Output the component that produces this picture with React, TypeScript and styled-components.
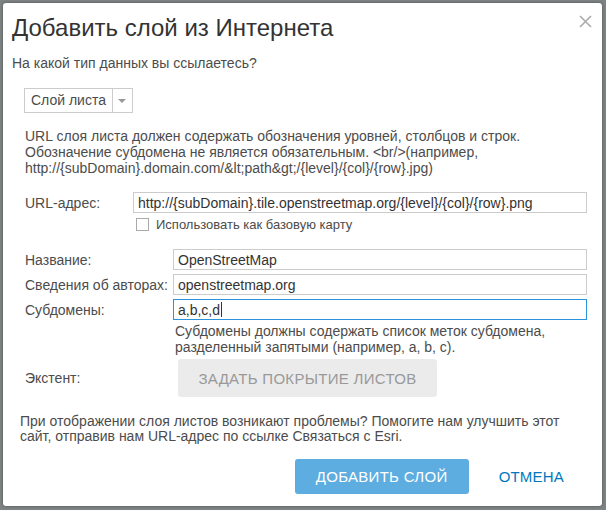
import React from 'react';
import styled, { createGlobalStyle } from 'styled-components';

const GlobalStyle = createGlobalStyle`
  html, body {
    margin: 0;
    padding: 0;
    background: #7d8282;
  }
  body {
    font-family: "Liberation Sans", Arial, sans-serif;
  }
`;

const Page = styled.div`
  width: 606px;
  height: 510px;
  padding: 3px 4px 4px 3px;
  box-sizing: border-box;
`;

const Dialog = styled.div`
  height: 100%;
  background: #fff;
  border-radius: 3px;
  box-shadow: 0 0 3px rgba(0, 0, 0, 0.4);
  padding: 10px 15px 0 9px;
  box-sizing: border-box;
  color: #4c4c4c;
  font-size: 14px;
`;

const Header = styled.div`
  display: flex;
  justify-content: space-between;
  align-items: flex-start;
`;

const Title = styled.h1`
  margin: 0;
  font-weight: normal;
  font-size: 24px;
  line-height: 30px;
  color: #333;
`;

const Close = styled.svg`
  margin-top: 2px;
  margin-right: -5px;
`;

const Question = styled.p`
  margin: 11px 0 0;
  line-height: 18px;
`;

const Select = styled.div`
  display: inline-flex;
  margin: 16px 0 0 12px;
  height: 25px;
  border: 1px solid #ccc;
  box-sizing: border-box;
  align-items: stretch;
  font-size: 14px;
`;

const SelectText = styled.span`
  padding: 0 6px 0 6px;
  line-height: 23px;
`;

const SelectArrow = styled.span`
  width: 19px;
  border-left: 1px solid #ccc;
  display: flex;
  align-items: center;
  justify-content: center;
  &::after {
    content: '';
    border-left: 4px solid transparent;
    border-right: 4px solid transparent;
    border-top: 4px solid #999;
  }
`;

const Body = styled.div`
  padding-left: 13px;
`;

const Hint = styled.p<{ $indent?: number; $lh?: number; $top: number }>`
  margin: ${p => p.$top}px 0 0;
  padding-left: ${p => p.$indent ?? 0}px;
  line-height: ${p => p.$lh ?? 16}px;
  font-size: 14px;
`;

const Form = styled.div<{ $label: number; $top: number }>`
  display: grid;
  grid-template-columns: ${p => p.$label}px 1fr;
  row-gap: 4px;
  align-items: center;
  margin-top: ${p => p.$top}px;
`;

const Label = styled.label`
  line-height: 20px;
`;

const Field = styled.div<{ $focused?: boolean }>`
  display: flex;
  align-items: center;
  font-size: 14px;
  color: #333;
  height: 21px;
  box-sizing: border-box;
  border: 1px solid ${p => (p.$focused ? '#2a93dc' : '#ccc')};
  padding: 0 4px;
  white-space: nowrap;
  overflow: hidden;
`;

const Caret = styled.span`
  width: 1px;
  height: 15px;
  margin-left: 1px;
  background: #333;
`;

const CheckRow = styled.div`
  display: flex;
  align-items: center;
  gap: 7px;
  height: 17px;
  margin: 3px 0 0 0;
  padding-left: 111px;
  font-size: 13px;
`;

const Box = styled.span`
  width: 11px;
  height: 11px;
  border: 1px solid #aaa;
  background: #fff;
`;

const GrayButton = styled.div`
  width: 259px;
  height: 38px;
  margin-left: 5px;
  background: #ebebeb;
  border-radius: 3px;
  color: #999;
  font-size: 15px;
  letter-spacing: 0.3px;
  display: flex;
  align-items: center;
  justify-content: center;
`;

const Footer = styled.div`
  display: flex;
  justify-content: flex-end;
  align-items: center;
  gap: 30px;
  margin-top: 15px;
`;

const PrimaryButton = styled.div`
  width: 174px;
  height: 35px;
  background: #5dade0;
  color: #fff;
  border-radius: 3px;
  display: flex;
  align-items: center;
  justify-content: center;
  font-size: 15px;
  letter-spacing: 0.3px;
`;

const LinkButton = styled.span`
  color: #0079c1;
  font-size: 15px;
  letter-spacing: 0.2px;
  margin-right: 23px;
`;

export default function App() {
  return (
    <>
      <GlobalStyle />
      <Page>
        <Dialog>
          <Header>
            <Title>Добавить слой из Интернета</Title>
            <Close width="13" height="13" viewBox="0 0 13 13">
              <path d="M1 1 L12 12 M12 1 L1 12" stroke="#aaa" strokeWidth="1.6" fill="none" />
            </Close>
          </Header>
          <Question>На какой тип данных вы ссылаетесь?</Question>
          <Select>
            <SelectText>Слой листа</SelectText>
            <SelectArrow />
          </Select>
          <Body>
            <Hint $top={15}>
              URL слоя листа должен содержать обозначения уровней, столбцов и строк.
              <br />
              Обозначение субдомена не является обязательным. &lt;br/&gt;(например,
              <br />
              http://{'{subDomain}'}.domain.com/&amp;lt;path&amp;gt;/{'{level}'}/{'{col}'}/{'{row}'}.jpg)
            </Hint>
            <Form $label={108} $top={16}>
              <Label>URL-адрес:</Label>
              <Field>http://{'{subDomain}'}.tile.openstreetmap.org/{'{level}'}/{'{col}'}/{'{row}'}.png</Field>
            </Form>
            <CheckRow>
              <Box />
              Использовать как базовую карту
            </CheckRow>
            <Form $label={148} $top={16}>
              <Label>Название:</Label>
              <Field>OpenStreetMap</Field>
              <Label>Сведения об авторах:</Label>
              <Field>openstreetmap.org</Field>
              <Label>Субдомены:</Label>
              <Field $focused>
                a,b,c,d
                <Caret />
              </Field>
            </Form>
            <Hint $indent={150} $top={3}>
              Субдомены должны содержать список меток субдомена,
              <br />
              разделенный запятыми (например, a, b, c).
            </Hint>
            <Form $label={148} $top={4}>
              <Label>Экстент:</Label>
              <GrayButton>ЗАДАТЬ ПОКРЫТИЕ ЛИСТОВ</GrayButton>
            </Form>
          </Body>
          <Hint $top={17} $lh={15} $indent={8}>
            При отображении слоя листов возникают проблемы? Помогите нам улучшить этот
            <br />
            сайт, отправив нам URL-адрес по ссылке Связаться с Esri.
          </Hint>
          <Footer>
            <PrimaryButton>ДОБАВИТЬ СЛОЙ</PrimaryButton>
            <LinkButton>ОТМЕНА</LinkButton>
          </Footer>
        </Dialog>
      </Page>
    </>
  );
}
